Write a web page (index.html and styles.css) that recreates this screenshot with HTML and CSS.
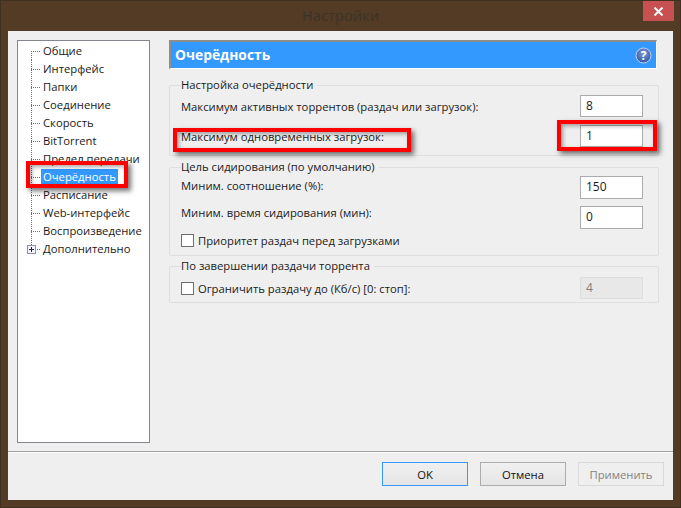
FILE: index.html
```html
<!DOCTYPE html>
<html lang="ru">
<head>
<meta charset="utf-8">
<title>Настройки</title>
<link rel="stylesheet" href="styles.css">
</head>
<body>
<div class="titlebar">
  <div class="title">Настройки</div>
  <button class="close" type="button" aria-label="Закрыть"><svg width="11" height="9" viewBox="0 0 11 9"><path d="M1.5 0.5 L9.5 8.5 M9.5 0.5 L1.5 8.5" stroke="#fff" stroke-width="2" fill="none"/></svg></button>
</div>
<div class="client">
  <div class="main">
    <nav class="tree">
      <div class="row"><span class="stem stem-first"></span><span class="label">Общие</span></div>
      <div class="row"><span class="stem"></span><span class="label">Интерфейс</span></div>
      <div class="row"><span class="stem"></span><span class="label">Папки</span></div>
      <div class="row"><span class="stem"></span><span class="label">Соединение</span></div>
      <div class="row"><span class="stem"></span><span class="label">Скорость</span></div>
      <div class="row"><span class="stem"></span><span class="label">BitTorrent</span></div>
      <div class="row"><span class="stem"></span><span class="label">Предел передачи</span></div>
      <div class="row"><span class="stem"></span><span class="label selected">Очерёдность</span></div>
      <div class="row"><span class="stem"></span><span class="label">Расписание</span></div>
      <div class="row"><span class="stem"></span><span class="label">Web-интерфейс</span></div>
      <div class="row"><span class="stem"></span><span class="label">Воспроизведение</span></div>
      <div class="row"><span class="stem stem-last"><svg class="plus" width="9" height="9" viewBox="0 0 9 9"><rect x=".5" y=".5" width="8" height="8" fill="#f4f4fa" stroke="#8f8fa8"/><path d="M2 4.5H7M4.5 2V7" stroke="#23234a"/></svg></span><span class="label">Дополнительно</span></div>
    </nav>
    <section class="panel">
      <header class="panel-head">
        <h1>Очерёдность</h1>
        <svg class="help" width="17" height="17" viewBox="0 0 17 17"><defs><radialGradient id="hg" cx=".5" cy=".35" r=".7"><stop offset="0" stop-color="#7f9bd8"/><stop offset="1" stop-color="#2f4f9f"/></radialGradient></defs><circle cx="8.5" cy="8.5" r="7.5" fill="url(#hg)" stroke="#c6d4ef"/><text x="8.5" y="12.5" text-anchor="middle" class="help-mark">?</text></svg>
      </header>
      <fieldset class="group group-queue">
        <legend>Настройка очерёдности</legend>
        <div class="field"><span>Максимум активных торрентов (раздач или загрузок):</span><input class="num" value="8"></div>
        <div class="field"><span>Максимум одновременных загрузок:</span><input class="num" value="1"></div>
      </fieldset>
      <fieldset class="group group-seed">
        <legend>Цель сидирования (по умолчанию)</legend>
        <div class="field field-raised"><span>Миним. соотношение (%):</span><input class="num num-tall" value="150"></div>
        <div class="field field-top"><span>Миним. время сидирования (мин):</span><input class="num num-tall" value="0"></div>
        <label class="check check-pull"><span class="box"></span>Приоритет раздач перед загрузками</label>
      </fieldset>
      <fieldset class="group group-done">
        <legend>По завершении раздачи торрента</legend>
        <div class="field"><label class="check"><span class="box"></span>Ограничить раздачу до (Кб/с) [0: стоп]:</label><input class="num num-off" value="4" disabled></div>
      </fieldset>
    </section>
  </div>
  <footer class="footer">
    <button class="btn btn-default" type="button">OK</button>
    <button class="btn" type="button">Отмена</button>
    <button class="btn btn-off" type="button" disabled>Применить</button>
  </footer>
</div>
<div class="mark mark-tree"></div>
<div class="mark mark-label"></div>
<div class="mark mark-input"></div>
</body>
</html>
```
FILE: styles.css
```css
* { box-sizing: border-box; }
html, body { margin: 0; height: 100%; }
body {
  position: relative;
  width: 681px;
  height: 508px;
  overflow: hidden;
  background: #533b25;
  font-family: "Open Sans", "Noto Sans", sans-serif;
  font-size: 11.25px;
  color: #1a1a1a;
  display: flex;
  flex-direction: column;
  padding: 0 8px 8px;
  box-shadow: inset 0 0 0 1px #40301f;
}
.titlebar {
  height: 31px;
  flex: none;
  display: flex;
  justify-content: center;
  position: relative;
}
.title {
  font-size: 14.7px;
  line-height: 31px;
  color: #3b3327;
}
.close {
  position: absolute;
  right: -1px;
  top: 1px;
  width: 31px;
  height: 20px;
  padding: 0;
  border: 0;
  background: #c75050;
  display: flex;
  align-items: center;
  justify-content: center;
}
.client {
  flex: 1;
  background: #efefef;
  display: flex;
  flex-direction: column;
}
.main {
  height: 421px;
  padding: 9px 0 0 9px;
  display: flex;
  gap: 19px;
  border-bottom: 1px solid #a0a0a0;
  box-shadow: 0 1px 0 #fff;
  flex: none;
}
.tree {
  width: 133px;
  height: 403px;
  flex: none;
  background: #fff;
  border: 1px solid #85858f;
  padding: 1px 0 0 13px;
}
.row {
  height: 18px;
  display: flex;
  align-items: center;
}
.stem {
  width: 10px;
  height: 18px;
  flex: none;
  position: relative;
  background-image:
    repeating-linear-gradient(to bottom, #6e6e6e 0 1px, transparent 1px 2px),
    repeating-linear-gradient(to right, #6e6e6e 0 1px, transparent 1px 2px);
  background-size: 1px 100%, 100% 1px;
  background-position: 0 0, 0 9px;
  background-repeat: no-repeat;
}
.stem-first { background-size: 1px 9px, 100% 1px; background-position: 0 9px, 0 9px; }
.stem-last { background-size: 1px 9px, 100% 1px; background-position: 0 0, 0 9px; }
.plus { position: absolute; left: -4px; top: 5px; }
.label {
  padding: 0 2px;
  line-height: 16px;
  white-space: nowrap;
}
.selected { background: #3399ff; color: #fff; }
.panel {
  width: 490px;
  flex: none;
  display: flex;
  flex-direction: column;
}
.panel-head {
  width: 488px;
  height: 29px;
  flex: none;
  background: #3399ff;
  border-top: 2px solid #8d8d8d;
  border-left: 2px solid #8d8d8d;
  border-right: 1px solid #fff;
  border-bottom: 1px solid #fff;
  display: flex;
  align-items: center;
  justify-content: space-between;
  padding: 0 4px 0 4px;
}
h1 {
  margin: 0 0 2px;
  font-size: 13.8px;
  font-weight: 700;
  color: #fff;
}
.help-mark { font-size: 12px; font-weight: 700; fill: #fff; }
.group {
  margin: 0;
  min-width: 0;
  border: 1px solid #dedede;
  border-radius: 2px;
  padding: 0 15px 0 11px;
}
legend {
  margin: 0;
  padding: 0 4px 0 0;
  line-height: 14px;
}
.group-queue { margin-top: 9px; height: 78px; }
.group-seed { margin-top: 4px; height: 96px; }
.group-done { margin-top: 3px; height: 44px; }
.field {
  display: flex;
  justify-content: space-between;
  align-items: center;
  height: 22px;
  margin-bottom: 8px;
}
.group-queue .field:first-of-type { margin-top: 3px; }
.group-seed .field:first-of-type { margin-top: 2px; }
.group-done .field { margin-top: 4px; }
.field-raised span { margin-bottom: 3px; }
.field-top { align-items: flex-start; }
.field-top span { margin-top: -1px; }
.check-pull { margin-top: -3px; }
.num {
  width: 63px;
  height: 22px;
  border: 1px solid #ababab;
  background: #fff;
  font: inherit;
  font-size: 12px;
  color: #1a1a1a;
  padding: 0 5px 2px;
  outline: none;
}
.num-tall { height: 23px; }
.num-off {
  background: #e8e8e8;
  border-color: #dcdcdc;
  color: #7d7d7d;
}
.check {
  display: flex;
  align-items: center;
  gap: 4px;
}
.box {
  width: 13px;
  height: 13px;
  flex: none;
  background: #fff;
  border: 1px solid #6f6f6f;
}
.footer {
  flex: 1;
  display: flex;
  justify-content: flex-end;
  gap: 12px;
  padding: 10px 9px 0 0;
}
.btn {
  width: 86px;
  height: 24px;
  padding: 0;
  font: inherit;
  color: #111;
  border: 1px solid #acacac;
  background: linear-gradient(#f0f0f0, #e5e5e5);
}
.btn-default { border-color: #3399ff; }
.btn-off {
  border-color: #d9d9d9;
  background: #efefef;
  color: #838383;
}
.mark {
  position: absolute;
  border: 4px solid #f00;
  box-shadow: 3px 3px 5px rgba(0, 0, 0, .55), inset 2px 2px 4px rgba(0, 0, 0, .35);
}
.mark-tree { left: 26px; top: 161px; width: 102px; height: 27px; }
.mark-label { left: 173px; top: 128px; width: 238px; height: 24px; }
.mark-input { left: 557px; top: 120px; width: 100px; height: 31px; }
```
